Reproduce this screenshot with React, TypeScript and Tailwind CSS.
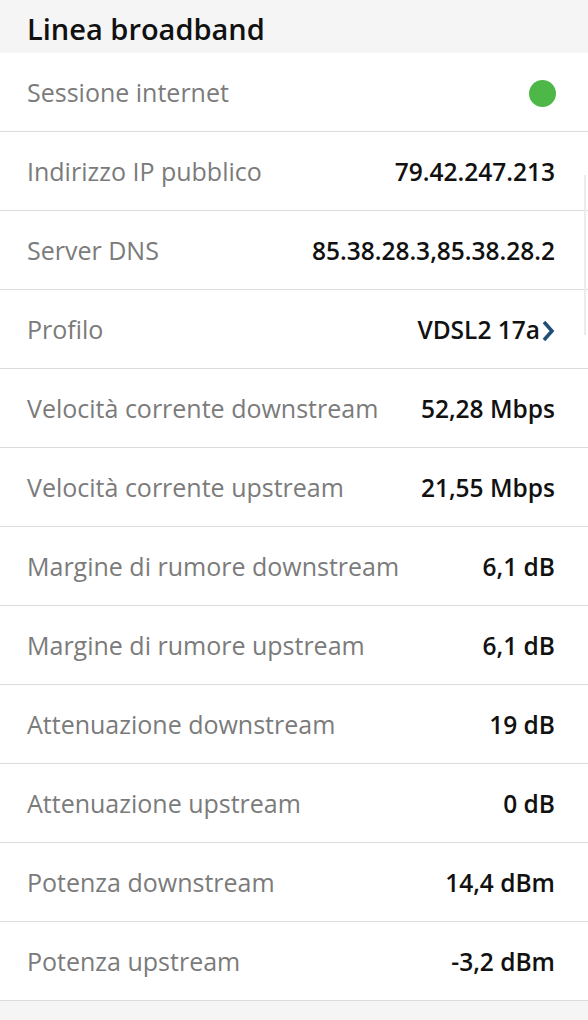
type Row = { label: string; value?: string; dot?: boolean; link?: boolean };

const rows: Row[] = [
  { label: "Sessione internet", dot: true },
  { label: "Indirizzo IP pubblico", value: "79.42.247.213" },
  { label: "Server DNS", value: "85.38.28.3,85.38.28.2" },
  { label: "Profilo", value: "VDSL2 17a", link: true },
  { label: "Velocità corrente downstream", value: "52,28 Mbps" },
  { label: "Velocità corrente upstream", value: "21,55 Mbps" },
  { label: "Margine di rumore downstream", value: "6,1 dB" },
  { label: "Margine di rumore upstream", value: "6,1 dB" },
  { label: "Attenuazione downstream", value: "19 dB" },
  { label: "Attenuazione upstream", value: "0 dB" },
  { label: "Potenza downstream", value: "14,4 dBm" },
  { label: "Potenza upstream", value: "-3,2 dBm" },
];

const App = () => {
  return (
    <div className="relative min-h-[1020px] bg-[#f5f5f5] font-['Open_Sans',sans-serif]">
      <div className="h-[53px] flex items-center px-[27px] pt-[4px]">
        <h1 className="text-[29px] font-semibold text-[#111] leading-none">Linea broadband</h1>
      </div>
      <div className="bg-white">
        {rows.map((row, i) => (
          <div
            key={i}
            className="h-[79px] flex items-center justify-between pl-[27px] pr-[33px] border-b border-[#dcdcdc]"
          >
            <span className="text-[25px] text-[#7b7b7b] pt-[2px]">{row.label}</span>
            {row.dot && <span className="w-[27px] h-[27px] rounded-full bg-[#4db848] mr-[-1px] mt-[2px]" />}
            {row.value && (
              <span className="flex items-center text-[24.5px] text-[#111] font-semibold pt-[2px]">
                {row.value}
                {row.link && (
                  <svg width="14" height="24" viewBox="0 0 14 24" className="ml-[1px] mt-[1px]">
                    <path d="M3 3 L11 12 L3 21" fill="none" stroke="#1f4e79" strokeWidth="3.5" strokeLinejoin="miter" />
                  </svg>
                )}
              </span>
            )}
          </div>
        ))}
      </div>
      <div className="absolute right-[2px] top-[175px] w-[2px] h-[160px] bg-[#ececec]" />
    </div>
  );
};

export default App;
